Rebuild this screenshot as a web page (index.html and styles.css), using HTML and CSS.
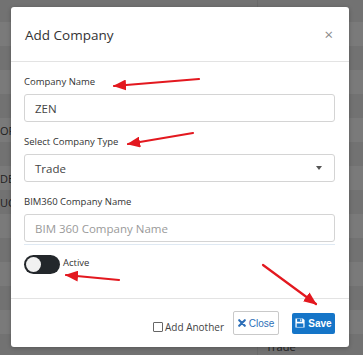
FILE: index.html
```html
<!DOCTYPE html>
<html>
<head>
<meta charset="utf-8">
<link rel="stylesheet" href="styles.css">
</head>
<body>
<div class="backdrop">
  <div class="row r0"><span class="c1"></span><span class="c2">Trade</span></div>
  <div class="row"><span class="c1"></span><span class="c2"></span></div>
  <div class="row"><span class="c1"></span><span class="c2"></span></div>
  <div class="row"><span class="c1"></span><span class="c2"></span></div>
  <div class="row"><span class="c1"></span><span class="c2"></span></div>
  <div class="row"><span class="c1">OR</span><span class="c2"></span></div>
  <div class="row"><span class="c1"></span><span class="c2"></span></div>
  <div class="row"><span class="c1">DE</span><span class="c2"></span></div>
  <div class="row"><span class="c1">UC</span><span class="c2"></span></div>
  <div class="row"><span class="c1"></span><span class="c2"></span></div>
  <div class="row"><span class="c1"></span><span class="c2"></span></div>
  <div class="row"><span class="c1"></span><span class="c2"></span></div>
  <div class="row"><span class="c1"></span><span class="c2"></span></div>
  <div class="row"><span class="c1"></span><span class="c2"></span></div>
  <div class="row"><span class="c1"></span><span class="c2">Trade</span></div>
</div>

<div class="modal">
  <div class="modal-header">
    <h4 class="modal-title">Add Company</h4>
    <span class="modal-close">&times;</span>
  </div>
  <div class="modal-body">
    <div class="group">
      <label class="lbl">Company Name</label>
      <div class="input">ZEN</div>
    </div>
    <div class="group">
      <label class="lbl">Select Company Type</label>
      <div class="input select">Trade<span class="caret"></span></div>
    </div>
    <div class="group">
      <label class="lbl">BIM360 Company Name</label>
      <div class="input placeholder">BIM 360 Company Name</div>
      <div class="focusline"></div>
    </div>
    <div class="switch-row">
      <span class="switch"><span class="knob"></span></span>
      <span class="switch-label">Active</span>
    </div>
  </div>
  <div class="modal-footer">
    <label class="check"><span class="box"></span>Add Another</label>
    <button class="btn btn-close"><svg class="ico" viewBox="0 0 10 10" width="8" height="8"><path d="M1.5 1.5 L8.5 8.5 M8.5 1.5 L1.5 8.5" stroke="#2d6fb8" stroke-width="2.6" stroke-linecap="round"/></svg>Close</button>
    <button class="btn btn-save"><svg class="ico" viewBox="0 0 12 12" width="10" height="10"><path d="M0.5 0.5 H9.5 L11.5 2.5 V11.5 H0.5 Z" fill="#fff"/><rect x="2.5" y="1" width="6" height="3.5" fill="#1575c8"/><rect x="6.3" y="1.5" width="1.3" height="2.4" fill="#fff"/><rect x="2" y="6.5" width="8" height="4.2" fill="#1575c8"/></svg>Save</button>
  </div>
</div>

<svg class="arrows" width="363" height="355" viewBox="0 0 363 355">
  <defs>
    <marker id="ah" viewBox="0 0 12 10" refX="11" refY="5" markerWidth="6" markerHeight="5" orient="auto" markerUnits="strokeWidth">
      <path d="M0 0 L12 5 L0 10 Z" fill="#e3181f"/>
    </marker>
  </defs>
  <g stroke="#e3181f" stroke-width="2.2" fill="none" stroke-linecap="round">
    <line x1="199" y1="79" x2="114" y2="86" marker-end="url(#ah)"/>
    <line x1="193" y1="133" x2="128" y2="144" marker-end="url(#ah)"/>
    <line x1="119" y1="280" x2="66" y2="275" marker-end="url(#ah)"/>
    <line x1="263" y1="265" x2="316" y2="304" marker-end="url(#ah)"/>
  </g>
</svg>
</body>
</html>
```
FILE: styles.css
```css
html, body {
  margin: 0;
  padding: 0;
}
body {
  width: 363px;
  height: 355px;
  overflow: hidden;
  position: relative;
  background: #747474;
  font-family: "Open Sans", "Noto Sans", sans-serif;
}
.backdrop {
  display: flex;
  flex-direction: column;
  margin-top: -2px;
}
.row {
  height: 24px;
  display: flex;
  align-items: center;
  background: #727272;
  font-size: 11px;
  color: #1f1f1f;
}
.row:nth-child(even) {
  background: #7a7a7a;
}
.c1 {
  width: 257px;
  white-space: nowrap;
  flex: none;
}
.c2 {
  flex: 1;
  height: 100%;
  border-left: 1px solid #6a6a6a;
  padding-left: 8px;
  display: flex;
  align-items: center;
}
.r0 .c2 { align-items: flex-end; }

.modal {
  position: absolute;
  left: 11px;
  top: 7px;
  width: 338px;
  height: 340px;
  background: #fff;
  border-radius: 3px;
  box-shadow: 0 1px 4px rgba(0,0,0,0.25);
  display: flex;
  flex-direction: column;
}
.modal-header {
  height: 55px;
  box-sizing: border-box;
  border-bottom: 1px solid #e3e3e3;
  display: flex;
  align-items: center;
  justify-content: space-between;
  padding: 0 16px 0 14px;
}
.modal-title {
  margin: 0;
  font-size: 13.5px;
  font-weight: 400;
  color: #333;
  padding-top: 1px;
}
.modal-close {
  font-size: 15px;
  color: #8a8a8a;
  line-height: 1;
}
.modal-body {
  padding: 13px 14px 0 13px;
  flex: 1;
}
.group {
  display: flex;
  flex-direction: column;
  margin-bottom: 13px;
}
.lbl {
  font-size: 9.5px;
  line-height: 14px;
  color: #333;
  margin-bottom: 5px;
}
.input {
  height: 28px;
  box-sizing: border-box;
  border: 1px solid #d4d4d4;
  border-radius: 3px;
  padding: 0 10px;
  font-size: 11.5px;
  color: #444;
  display: flex;
  align-items: center;
}
.select {
  justify-content: space-between;
}
.caret {
  width: 0;
  height: 0;
  border-left: 3.5px solid transparent;
  border-right: 3.5px solid transparent;
  border-top: 4.5px solid #555;
  margin-right: 2px;
}
.placeholder {
  color: #9a9a9a;
}
.focusline {
  height: 1px;
  background: #dfe9f3;
  margin-top: 2px;
  margin-bottom: -3px;
}
.switch-row {
  display: flex;
  align-items: flex-start;
  gap: 3px;
  height: 43px;
}
.switch {
  width: 36px;
  height: 19px;
  border-radius: 10px;
  background: #23272b;
  display: flex;
  align-items: center;
  padding-left: 2px;
  box-sizing: border-box;
}
.knob {
  width: 15px;
  height: 15px;
  border-radius: 50%;
  background: #f1f1f1;
}
.switch-label {
  font-size: 9.5px;
  color: #333;
  line-height: 14px;
  margin-top: 1px;
}
.modal-footer {
  height: 49px;
  box-sizing: border-box;
  border-top: 1px solid #e3e3e3;
  display: flex;
  align-items: center;
  justify-content: flex-end;
  padding: 0 14px 0 0;
}
.check {
  display: flex;
  align-items: center;
  font-size: 10px;
  color: #444;
  margin-top: 8px;
  margin-right: 9px;
  gap: 2px;
}
.box {
  width: 8px;
  height: 8px;
  border: 1px solid #666;
  border-radius: 1px;
  background: #fff;
}
.btn {
  font-family: "Liberation Sans", Arial, sans-serif;
  font-size: 10px;
  display: flex;
  align-items: center;
  gap: 1px;
  box-sizing: border-box;
  border-radius: 2px;
  padding: 0;
  justify-content: center;
}
.btn-close {
  width: 46px;
  height: 24px;
  background: #fff;
  border: 1px solid #c9c9c9;
  color: #2d6fb8;
  margin-right: 13px;
}
.btn-save {
  width: 43px;
  height: 21px;
  background: #1575c8;
  border: none;
  color: #fff;
  font-weight: 700;
}
.ico {
  margin-right: 2px;
}
.arrows {
  position: absolute;
  left: 0;
  top: 0;
  pointer-events: none;
}
```
